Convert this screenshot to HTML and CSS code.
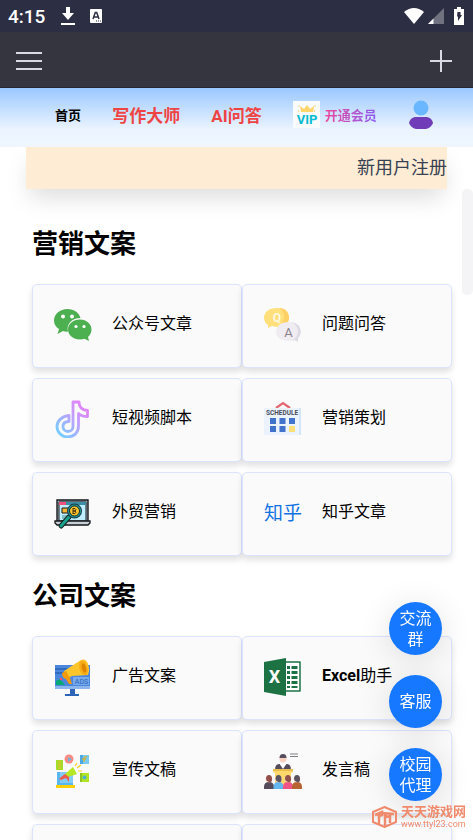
FILE: index.html
```html
<!DOCTYPE html>
<html lang="zh-CN">
<head>
    <meta charset="UTF-8">
    <meta name="viewport" content="width=device-width, initial-scale=1.0">
    <title>写作大师</title>
    <link rel="stylesheet" href="styles.css">
</head>
<body>
    <div class="status-bar">
        <span class="clock">4:15</span>
        <svg class="status-download" width="14" height="18" viewBox="0 0 14 18"><path d="M5 0h4v6h4l-6 7-6-7h4z" fill="#fff"/><path d="M0 16h14v2H0z" fill="#fff"/></svg>
        <svg width="12" height="14" viewBox="0 0 12 14"><rect width="12" height="14" rx="1" fill="#fff"/><path d="M3 10L5.3 3.5h1.4L9 10M4 8h4" fill="none" stroke="#2c2e43" stroke-width="1.5"/><path d="M6 12h1M8 12h1M10 12h1" stroke="#2c2e43"/></svg>
        <div class="status-right">
            <svg width="20" height="16" viewBox="0 0 20 16"><path d="M0 4Q10-4 20 4L10 16z" fill="#fff"/></svg>
            <svg width="16" height="16" viewBox="0 0 16 16"><path d="M16 0v16H0z" fill="#717280"/><path d="M5.500 10.500V16H0z" fill="#fff"/></svg>
            <svg class="status-battery" width="10" height="18" viewBox="0 0 10 18"><path d="M3 0h4v2h3v16H0V2h3z" fill="#fff"/><path d="M3.500 5h3v3h1.500l-4 6v-4.500H3z" fill="#2c2e43"/></svg>
        </div>
    </div>

    <header class="app-bar">
        <button class="icon-button" aria-label="菜单">
            <svg width="26" height="20" viewBox="0 0 26 20"><path d="M0 2h26M0 10h26M0 18h26" stroke="#d9d9e3" stroke-width="2"/></svg>
        </button>
        <button class="icon-button" aria-label="新建">
            <svg width="22" height="22" viewBox="0 0 22 22"><path d="M0 11h22M11 0v22" stroke="#d9d9e3" stroke-width="2"/></svg>
        </button>
    </header>

    <nav class="nav">
        <a class="nav-home" href="#">首页</a>
        <a class="nav-hot" href="#">写作大师</a>
        <a class="nav-hot" href="#">AI问答</a>
        <a class="nav-vip" href="#">
            <svg width="27" height="27" viewBox="0 0 27 27">
                <rect width="27" height="27" fill="#f8fafc"/>
                <path d="M8 11L7 5l4 3 3-4 3 4 4-3-1 6z" fill="#ffd66b"/>
                <path d="M5 9l1 2M22 9l-1 2M6 4v2M22 4v2" stroke="#f5d78c"/>
                <text x="14" y="23" text-anchor="middle" font-family="Roboto" font-weight="700" font-size="13" fill="#06bcd0">VIP</text>
            </svg>
            <span>开通会员</span>
        </a>
        <a class="nav-user" href="#" aria-label="我的">
            <svg width="26" height="30" viewBox="0 0 26 30"><circle cx="13" cy="8" r="7.500" fill="#6bb7ff"/><path d="M7 17h12q5 1 6 6-2 5-7 6H8q-5-1-7-6 1-5 6-6z" fill="#703cb8"/></svg>
        </a>
    </nav>

    <main class="content">
        <div class="banner"><a href="#">新用户注册</a></div>

        <section class="section">
            <h2>营销文案</h2>
            <div class="cards">
                <a class="card" href="#">
                    <svg class="card-icon" viewBox="0 0 38 38">
                        <path d="M13.500 3C6 3 0 8 0 14.500c0 4 2 6.500 5 8.500l-1.500 5L9 25q2 .8 5 .6C12 18 18 12 26.500 12 25 6.500 20 3 13.500 3z" fill="#4caf50"/>
                        <path d="M26 13.500c-7 0-12 4.500-12 10s5 10 12 10q2.500 0 4.500-.7L35 35l-1-4c2-2 3.500-4.500 3.500-7.500 0-5.500-5-10-11.500-10z" fill="#4caf50"/>
                        <circle cx="9" cy="10.500" r="2" fill="#fff"/><circle cx="18" cy="10.500" r="2" fill="#fff"/><circle cx="22" cy="20.500" r="1.600" fill="#fff"/><circle cx="30" cy="20.500" r="1.600" fill="#fff"/>
                    </svg>
                    <span>公众号文章</span>
                </a>
                <a class="card" href="#">
                    <svg class="card-icon" viewBox="0 0 38 38">
                        <path d="M13 2C5 2 0 6 0 12c0 3 2 6 4 7v3l4-2 5 1c7 0 12-4 12-9.500S20 2 13 2z" fill="#ffe07d"/>
                        <path d="M15 2c6 3 8 14-1 19 7 0 11-4 11-9.500S21 2 15 2z" fill="#ffd064"/>
                        <path d="M25 16c-8 0-13 4-13 10s6 9 13 9l6-1 3 2v-4c2-1 3-4 3-6 0-6-5-10-12-10z" fill="#efedf2"/>
                        <path d="M27 16c9 4 9 14 1 19l3-1 3 2v-4c5-5 3-15-7-16z" fill="#dedae3"/>
                        <text x="13" y="16" text-anchor="middle" font-family="Roboto" font-size="12" font-weight="700" fill="#fff8df">Q</text>
                        <text x="24.500" y="31" text-anchor="middle" font-family="Roboto" font-size="13" fill="#8c818f">A</text>
                    </svg>
                    <span>问题问答</span>
                </a>
                <a class="card" href="#">
                    <svg class="card-icon" viewBox="0 0 38 38">
                        <defs><linearGradient id="note" x1="0" y1="1" x2="1" y2="0"><stop offset="0" stop-color="#6bd5ff"/><stop offset=".55" stop-color="#c0a0ff"/><stop offset="1" stop-color="#f078f5"/></linearGradient></defs>
                        <path d="M19 2h6c0 5 3 8 8.500 8.500v6c-4 0-7-1-9-3V26c0 7-5 11-11 11S3 32 3 26.500 8 16 15 15.500v6c-4 0-6 2-6 5s2 5 5 5 5-2 5-5z" fill="none" stroke="url(#note)" stroke-width="2.800" stroke-linejoin="round"/>
                    </svg>
                    <span>短视频脚本</span>
                </a>
                <a class="card" href="#">
                    <svg class="card-icon" viewBox="0 0 38 38">
                        <path d="M12 8l7-5 7 5" fill="none" stroke="#e46770" stroke-width="2.200"/>
                        <path d="M0 8h37v27H0z" fill="#eaf3ff"/><path d="M35 8h2v27h-2z" fill="#d3e5fb"/>
                        <text x="18" y="15" text-anchor="middle" font-family="Roboto" font-weight="700" font-size="6.500" fill="#4a4d59">SCHEDULE</text>
                        <path d="M6 18h6v6H6zM15.500 18h6v6h-6zM25 18h6v6h-6zM6 26h6v6H6zM15.500 26h6v6h-6z" fill="#4173cd"/><path d="M25 26h6v6h-6z" fill="#ffe078"/>
                    </svg>
                    <span>营销策划</span>
                </a>
                <a class="card" href="#">
                    <svg class="card-icon" viewBox="0 0 38 38">
                        <path d="M3 6h31v22H3z" fill="#a9b7c3" stroke="#15171b" stroke-width="1.400"/>
                        <path d="M5 8h27v19H5z" fill="#bfeeff" stroke="#15171b"/><path d="M5 8h7v3H5z" fill="#ed527e"/><path d="M12 8h20v3H12z" fill="#3a8ea5"/>
                        <path d="M8 14h8v5H8z" fill="#f7b532" stroke="#15171b"/><path d="M8 22h6M8 24h4" stroke="#438899"/>
                        <path d="M1 27h35v2l-2 2H3l-2-2z" fill="#c7d0d6" stroke="#15171b" stroke-width="1.300"/>
                        <path d="M15 23L7 32" stroke="#14201f" stroke-width="5" stroke-linecap="round"/><path d="M15 23L7 32" stroke="#18a18c" stroke-width="3" stroke-linecap="round"/>
                        <circle cx="20.500" cy="17" r="7.500" fill="#18394a"/><circle cx="20.500" cy="17" r="6.500" fill="#20a092"/><circle cx="20.500" cy="17" r="5" fill="#ffc52c" stroke="#17262a"/>
                        <path d="M19 14v6M19 14.500h2q2 1.200 0 2.500h-2h2q2 1.200 0 2.500h-2" fill="none" stroke="#43330f"/>
                    </svg>
                    <span>外贸营销</span>
                </a>
                <a class="card" href="#">
                    <svg class="card-icon" viewBox="0 0 38 38"><text x="19" y="26" text-anchor="middle" font-family="Noto Sans CJK SC" font-size="19" fill="#1272e2">知乎</text></svg>
                    <span>知乎文章</span>
                </a>
            </div>
        </section>

        <section class="section">
            <h2>公司文案</h2>
            <div class="cards">
                <a class="card" href="#">
                    <svg class="card-icon" viewBox="0 0 38 38">
                        <path d="M1 7h35v24H1z" fill="#4a87dc"/><path d="M1 10h13v2H1zM1 14h10v2H1z" fill="#306bc0"/><path d="M1 28h35v3H1z" fill="#8db6ed"/>
                        <path d="M16 31h5v5h4v2H11v-2h5z" fill="#2c64b8"/>
                        <path d="M2 27v-4l4-2 5 6z" fill="#05a974"/><circle cx="7" cy="21" r="1.300" fill="#ee536c"/>
                        <path d="M19 19h16v8H19z" fill="#77a9ed"/><text x="27.500" y="26" text-anchor="middle" font-family="Roboto" font-size="7" fill="#2866b3">ADS</text>
                        <path d="M10 13L27 2q5-2 7 4t0 11l-16 1-5 3q-3-2-3-8z" fill="#ffc52d"/><path d="M8 15l4-2 4 7 2 6h-3l-3-5q-4-1-4-6z" fill="#f29a0c"/><ellipse cx="29.500" cy="10" rx="4" ry="7.500" transform="rotate(-15 29.500 10)" fill="#f5aa16"/><ellipse cx="30" cy="10" rx="2" ry="4.500" transform="rotate(-15 30 10)" fill="#df8500"/>
                    </svg>
                    <span>广告文案</span>
                </a>
                <a class="card" href="#">
                    <svg class="card-icon" viewBox="0 0 38 38">
                        <path d="M20 4h16v29H20" fill="#fff" stroke="#1d7244" stroke-width="1.500" stroke-linejoin="round"/>
                        <path d="M23 8h3v3h-3zM23 13h3v3h-3zM23 18h3v3h-3zM23 23h3v3h-3zM23 28h3v2h-3zM27.500 8h6v3h-6zM27.500 13h6v3h-6zM27.500 18h6v3h-6zM27.500 23h6v3h-6zM27.500 28h6v2h-6z" fill="#1d7244"/>
                        <path d="M0 4l22-4v38L0 34z" fill="#1d7244"/><text x="10.500" y="25" text-anchor="middle" font-family="Roboto" font-weight="700" font-size="18" fill="#fff">X</text>
                    </svg>
                    <span><b>Excel</b>助手</span>
                </a>
                <a class="card" href="#">
                    <svg class="card-icon" viewBox="0 0 38 38">
                        <path d="M3 20h16v14H3z" fill="#57b7ee"/><path d="M6 20h13v11H6z" fill="#82cbf5"/><path d="M2 33h19v3H2z" fill="#ffcf09"/>
                        <path d="M2 8h7v10H2z" fill="#a4da28"/><path d="M4 10h3M4 13h3M4 16h3" stroke="#f2ba29"/>
                        <circle cx="15" cy="7" r="4.500" fill="#fb8b82"/><path d="M14 5l4 2-4 3z" fill="#72b6dc"/>
                        <path d="M26 3h9v9h-9z" fill="#7acbf4"/><path d="M26 3h3v9h-3z" fill="#4ba9e5"/><path d="M33 5q-3-1-3 3v2M28 7h4" fill="none" stroke="#cbb548" stroke-width="1.500"/>
                        <path d="M26 21h9v9h-9z" fill="#b2e325"/><path d="M26 21h2v9h-2z" fill="#8bc421"/><circle cx="30.500" cy="25.500" r="2" fill="#4bb2cf"/>
                        <path d="M10 23l9-8 4 7-12 4z" fill="#b6e823"/><path d="M7 25l4-3 4 3v5l-3-4-5 2-2-1z" fill="#eb5b50"/>
                        <path d="M21 14l2-3M23 16l4-3M24 19h4" stroke="#ffd315" stroke-width="1.200"/>
                    </svg>
                    <span>宣传文稿</span>
                </a>
                <a class="card" href="#">
                    <svg class="card-icon" viewBox="0 0 38 38">
                        <path d="M26 2h8M26 4.500h8" stroke="#817d86" stroke-width="1.200"/>
                        <path d="M11 18q0-6 4-6h8q4 0 4 6z" fill="#554d5b"/><path d="M15 11l4 6 4-6z" fill="#fff"/><circle cx="19" cy="7" r="3.500" fill="#fad0bf"/><path d="M15.500 6q0-4 3.500-4t3.500 4z" fill="#554d5b"/>
                        <path d="M9 17h20v3l-2 1v16H11V21l-2-1z" fill="#ffd96b"/><path d="M9 17h20v2H9z" fill="#e9bd4e"/>
                        <path d="M0 37v-2q0-5 5-5t5 5v2z" fill="#554d5b"/><path d="M9.500 37v-2q0-5 5-5t5 5v2z" fill="#62b7ef"/><path d="M19 37v-2q0-5 5-5t5 5v2z" fill="#f05487"/><path d="M28 37v-2q0-5 5-5t5 5v2z" fill="#b86432"/>
                        <g fill="#fad0bf"><circle cx="5" cy="27" r="3.300"/><circle cx="14.500" cy="27" r="3.300"/><circle cx="24" cy="27" r="3.300"/><circle cx="33" cy="27" r="3.300"/></g>
                        <path d="M2 27q0-4 3-4t3 4-3 3-3-3zM21 27q0-4 3-4t3 4-3 3-3-3z" fill="#91504b"/><path d="M11.500 27q0-4 3-4t3 4-3 3-3-3zM30 27q0-4 3-4t3 4-3 3-3-3z" fill="#5b5360"/>
                    </svg>
                    <span>发言稿</span>
                </a>
                <a class="card" href="#"></a>
                <a class="card" href="#"></a>
            </div>
        </section>
    </main>

    <div class="scroll-thumb"></div>

    <div class="float-buttons">
        <button>交流群</button>
        <button>客服</button>
        <button>校园代理</button>
    </div>

    <div class="watermark">
        <svg width="25" height="22" viewBox="0 0 25 22">
            <path d="M12.500 1L24 6v10l-11.500 5L1 16V6z" fill="none" stroke="#ef8a6c" stroke-width="2"/>
            <path d="M3 9l7-3v3l-3 1v8M10 7l12 1M13 8v12M18 9v8M13 10l5 1" fill="none" stroke="#ef8a6c" stroke-width="2.500"/>
        </svg>
        <div class="watermark-text">
            <strong>天天游戏网</strong>
            <span>www.ttyl23.com</span>
        </div>
    </div>
</body>
</html>
```
FILE: styles.css
```css
* {
    box-sizing: border-box;
}

body {
    margin: 0;
    height: 100vh;
    overflow: hidden;
    display: flex;
    flex-direction: column;
    background-color: #fff;
    color: #000;
    font-family: Roboto, 'Noto Sans CJK SC', sans-serif;
    font-size: 16px;
}

a {
    color: inherit;
    text-decoration: none;
}

svg {
    display: block;
    flex-shrink: 0;
}

/* phone status bar */
.status-bar {
    display: flex;
    align-items: center;
    flex-shrink: 0;
    height: 32px;
    padding: 0 9px 0 8px;
    background-color: #2c2e43;
    color: #fff;
}

.clock {
    font-size: 19px;
    font-weight: 500;
}

.status-download {
    margin: 0 15px 0 16px;
}

.status-right {
    display: flex;
    align-items: center;
    gap: 4px;
    margin-left: auto;
}

.status-battery {
    margin-left: 6px;
}

.app-bar {
    display: flex;
    justify-content: space-between;
    align-items: center;
    flex-shrink: 0;
    height: 56px;
    padding: 2px 21px 0 16px;
    background-color: #353540;
    border-bottom: 1px solid #26262f;
}

.icon-button {
    padding: 0;
    border: none;
    background: none;
    cursor: pointer;
}

.nav {
    position: relative;
    z-index: 1;
    display: flex;
    justify-content: space-between;
    align-items: center;
    flex-shrink: 0;
    height: 59px;
    padding: 0 39px 6px 55px;
    background: linear-gradient(#9bc8ff, #ebf4ff 70%, #eff6ff);
    font-weight: 700;
    white-space: nowrap;
}

.nav-home {
    font-size: 13px;
}

.nav-hot {
    font-size: 17px;
    color: #ef4444;
}

.nav-vip {
    display: flex;
    align-items: center;
    gap: 5px;
    font-size: 13px;
}

.nav-vip span {
    background: linear-gradient(to right, #ec4899, #8b5cf6);
    -webkit-background-clip: text;
    background-clip: text;
    color: transparent;
}

.content {
    flex: 1;
    min-height: 0;
    overflow: hidden;
    padding: 0 21px 0 32px;
}

.banner {
    height: 42px;
    margin: 0 5px 15px -6px;
    background-color: #ffecd5;
    box-shadow: 0 12px 24px -4px rgba(0, 0, 0, 0.14);
    color: #374151;
    font-size: 18px;
    line-height: 42px;
    text-align: right;
}

.section {
    padding-top: 22px;
}

.section h2 {
    margin: 0 0 22px;
    font-size: 26px;
    font-weight: 700;
    line-height: 36px;
}

.cards {
    display: grid;
    grid-template-columns: 1fr 1fr;
    row-gap: 10px;
}

.card {
    display: flex;
    align-items: center;
    gap: 20px;
    height: 84px;
    padding: 0 21px 2px;
    border: 1px solid #dbe3ff;
    border-radius: 5px;
    background-color: #fafafa;
    box-shadow: 0 4px 6px rgba(0, 0, 0, 0.12);
}

.card-icon {
    width: 38px;
    height: 38px;
}

.card span {
    padding-bottom: 6px;
}

.scroll-thumb {
    position: fixed;
    top: 189px;
    right: 0;
    width: 11px;
    height: 106px;
    border-radius: 5px;
    background-color: #f4f4f6;
}

.float-buttons {
    position: fixed;
    right: 31px;
    bottom: 39px;
    display: flex;
    flex-direction: column;
    gap: 20px;
}

.float-buttons button {
    width: 53px;
    height: 53px;
    padding: 0 10px;
    border: none;
    border-radius: 50%;
    background-color: #1677ff;
    box-shadow: 0 4px 32px rgba(0, 0, 0, 0.12);
    color: #fff;
    font-family: inherit;
    font-size: 16px;
    line-height: 21px;
    cursor: pointer;
}

.watermark {
    position: fixed;
    right: 7px;
    bottom: 11px;
    display: flex;
    align-items: center;
    gap: 4px;
    color: #ef8a6c;
}

.watermark-text {
    display: flex;
    flex-direction: column;
}

.watermark-text strong {
    font-size: 13px;
    line-height: 15px;
}

.watermark-text span {
    font-size: 9px;
    line-height: 10px;
}
```
